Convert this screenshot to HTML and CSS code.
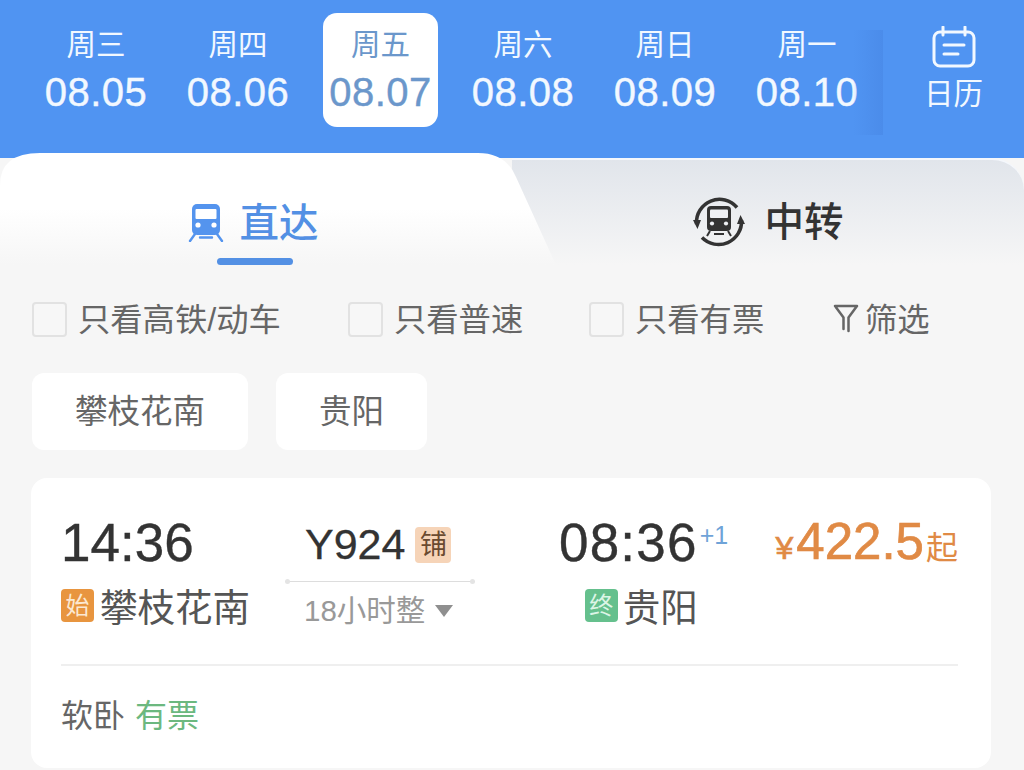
FILE: index.html
```html
<!DOCTYPE html>
<html lang="zh-CN">
<head>
    <meta charset="UTF-8">
    <meta name="viewport" content="width=device-width, initial-scale=1.0">
    <title>车次列表</title>
    <link rel="stylesheet" href="styles.css">
</head>
<body>
    <div class="date-bar">
        <div class="date-list">
            <div class="date-item"><span class="week">周三</span><span class="day">08.05</span></div>
            <div class="date-item"><span class="week">周四</span><span class="day">08.06</span></div>
            <div class="date-item active"><span class="week">周五</span><span class="day">08.07</span></div>
            <div class="date-item"><span class="week">周六</span><span class="day">08.08</span></div>
            <div class="date-item"><span class="week">周日</span><span class="day">08.09</span></div>
            <div class="date-item"><span class="week">周一</span><span class="day">08.10</span></div>
        </div>
        <div class="calendar-btn">
            <svg class="calendar-icon" viewBox="0 0 44 42" width="44" height="42">
                <rect x="2" y="6" width="40" height="34" rx="6" fill="none" stroke="#f2f8ff" stroke-width="3"/>
                <path d="M11 1v8M33 1v8M12 19h20M12 28h14" fill="none" stroke="#f2f8ff" stroke-width="3" stroke-linecap="round"/>
            </svg>
            <span>日历</span>
        </div>
    </div>

    <div class="tabs">
        <div class="tab tab-direct">
            <div class="tab-label">
                <svg viewBox="0 0 36 38" width="36" height="38">
                    <rect x="4" y="0" width="28" height="31" rx="5" fill="#5494ee"/>
                    <rect x="7.500" y="5" width="21" height="10" rx="1" fill="#fff"/>
                    <circle cx="10" cy="21" r="2.600" fill="#fff"/>
                    <circle cx="26" cy="21" r="2.600" fill="#fff"/>
                    <path d="M7 30l-5 7M29 30l5 7M12 33.500h12" fill="none" stroke="#5494ee" stroke-width="2.400" stroke-linecap="round"/>
                </svg>
                <span>直达</span>
            </div>
            <i class="tab-line"></i>
        </div>
        <div class="tab tab-transfer">
            <div class="tab-label">
                <svg viewBox="0 0 52 52" width="52" height="52">
                    <path d="M3.500 28A23 23 0 0 1 44 11.500M48.500 24A23 23 0 0 1 9 41.500" fill="none" stroke="#333" stroke-width="3.500"/>
                    <path d="M0 24l8 0-3.500 9zM52 28l-8 0 3.500-9z" fill="#333"/>
                    <rect x="14" y="10" width="24" height="25" rx="4" fill="#333"/>
                    <rect x="17" y="13.500" width="18" height="8.500" rx="1" fill="#eef0f4"/>
                    <circle cx="19" cy="27.500" r="2.100" fill="#eef0f4"/>
                    <circle cx="33" cy="27.500" r="2.100" fill="#eef0f4"/>
                    <path d="M17 35l-3 5M35 35l3 5M21 38h10" fill="none" stroke="#333" stroke-width="2"/>
                </svg>
                <span>中转</span>
            </div>
        </div>
    </div>

    <div class="filters">
        <label class="check check-high"><i class="box"></i>只看高铁/动车</label>
        <label class="check check-normal"><i class="box"></i>只看普速</label>
        <label class="check check-ticket"><i class="box"></i>只看有票</label>
        <div class="filter-btn">
            <svg viewBox="0 0 26 30" width="26" height="30">
                <path d="M2 3h22l-8.500 11.500V28M10.500 26V14.500L2 3" fill="none" stroke="#666" stroke-width="2.500" stroke-linejoin="round" stroke-linecap="round"/>
            </svg>
            <span>筛选</span>
        </div>
    </div>

    <div class="stations">
        <div class="pill">攀枝花南</div>
        <div class="pill">贵阳</div>
    </div>

    <div class="card">
        <div class="card-main">
            <div class="depart">
                <div class="time">14:36</div>
                <div class="station"><i class="tag tag-start">始</i>攀枝花南</div>
            </div>
            <div class="middle">
                <div class="train-no">Y924<i class="berth">铺</i></div>
                <div class="route-line"></div>
                <div class="duration">18小时整<i class="arrow"></i></div>
            </div>
            <div class="arrive">
                <div class="arrive-inner">
                    <div class="time time-arrive">08:36<sup class="plus">+1</sup></div>
                    <div class="station"><i class="tag tag-end">终</i>贵阳</div>
                </div>
            </div>
            <div class="price"><small class="yen">¥</small>422.5<small class="from">起</small></div>
        </div>
        <div class="seats">软卧<span class="seat-left">有票</span></div>
    </div>
</body>
</html>
```

FILE: styles.css
```css
* { box-sizing: border-box; }
html, body { height: 100%; }
body { margin: 0; width: 1024px; height: 770px; overflow: hidden; background: #f6f6f6; font-family: "Liberation Sans", "Noto Sans CJK SC", sans-serif; color: #333; }
i { font-style: normal; }

/* date strip */
.date-bar { height: 158px; background: #5094f2; display: flex; padding: 13px 0 0 25px; color: #f2f8ff; }
.date-list { display: flex; width: 858px; }
.date-item { width: 142px; height: 114px; display: flex; flex-direction: column; align-items: center; border-radius: 14px; }
.date-item .week { font-size: 29.500px; line-height: 36px; margin-top: 14px; }
.date-item .day { font-size: 40px; line-height: 48px; margin-top: 5px; letter-spacing: 0.5px; -webkit-text-stroke: 0.4px; }
.date-item.active { width: 115px; margin: 0 14px; background: #fff; color: #6b97cb; }
.calendar-btn { position: relative; flex: 1; display: flex; flex-direction: column; align-items: center; padding-top: 13px; }
.calendar-btn::before { content: ""; position: absolute; left: -30px; top: 17px; width: 30px; height: 105px; background: linear-gradient(90deg, rgba(75, 140, 234, 0), #4b8cea); }
.calendar-icon { display: block; margin-left: 1px; }
.calendar-btn span { font-size: 29.500px; line-height: 40px; margin-top: 6px; }

/* tabs */
.tabs { display: flex; height: 112px; margin-top: -5px; }
.tab { display: flex; flex-direction: column; align-items: center; }
.tab-label { display: flex; align-items: center; font-size: 39.500px; line-height: 52px; font-weight: 500; }
.tab-direct { position: relative; z-index: 1; width: 555px; padding: 44px 49px 0 0; background: linear-gradient(180deg, #fff 50%, #f6f6f6 100%); color: #5390e4; clip-path: path("M0 32 Q0 0 40 0 H478 Q506 0 516 24 L556 112 H0 Z"); }
.tab-direct svg { margin-right: 16px; }
.tab-line { width: 76px; height: 7px; margin: 9px 0 0 4px; border-radius: 4px; background: #5390e4; }
.tab-transfer { flex: 1; margin: 5px 0 0 -43px; padding: 36px 0 0 0; background: linear-gradient(180deg, #e1e5eb 0%, #f6f6f6 100%); border-top: 2px solid #f4f7fc; border-top-right-radius: 32px; color: #333; }
.tab-transfer svg { margin-right: 20px; }

/* filters */
.filters { display: flex; align-items: center; height: 70px; margin-top: 17px; padding-left: 32px; font-size: 32.300px; color: #666; }
.check { display: flex; align-items: center; }
.box { width: 35px; height: 35px; margin: 4px 11px 0 0; border: 2px solid #e2e2e2; border-radius: 4px; background: #f7f7f7; }
.check-high { width: 316px; }
.check-normal { width: 241px; }
.check-ticket { width: 244px; }
.filter-btn { display: flex; align-items: center; }
.filter-btn svg { margin: 2px 6px 0 0; }

/* station pills */
.stations { display: flex; gap: 28px; margin-top: 21px; padding-left: 32px; }
.pill { height: 77px; padding: 0 43px 6px; display: flex; align-items: center; background: #fff; border-radius: 12px; font-size: 32.500px; color: #666; }

/* train card */
.card { margin: 28px 33px 0 31px; height: 290px; padding: 34px 33px 0 30px; background: #fff; border-radius: 16px; }
.card-main { display: flex; height: 154px; border-bottom: 2px solid #efefef; }
.depart { width: 224px; }
.time { position: relative; font-size: 53px; line-height: 62px; color: #333; -webkit-text-stroke: 0.4px; }
.time-arrive { letter-spacing: 1.2px; }
.station { display: flex; align-items: center; margin-top: 9px; font-size: 37.500px; line-height: 50px; color: #555; }
.tag { display: block; width: 33px; height: 33px; margin: 0 6px 6px 0; border-radius: 4px; text-align: center; font-size: 24px; line-height: 33px; }
.tag-start { background: #e8953f; color: #fbe8d2; }
.tag-end { margin-right: 5px; background: #65c08d; color: #dcf5e6; }
.middle { width: 190px; }
.train-no { display: flex; align-items: center; height: 60px; padding: 5px 0 0 20px; font-size: 43px; color: #333; -webkit-text-stroke: 0.3px; }
.berth { width: 36px; height: 36px; margin-left: 10px; border-radius: 4px; background: #f6d4b8; text-align: center; font-size: 27px; line-height: 36px; color: #6a4a30; -webkit-text-stroke: 0; }
.route-line { position: relative; height: 1px; margin-top: 9px; background: #ddd; }
.route-line::before, .route-line::after { content: ""; position: absolute; top: -2px; width: 5px; height: 5px; border-radius: 50%; background: #e4e4e4; }
.route-line::before { left: 0; }
.route-line::after { right: 0; }
.duration { display: flex; align-items: center; margin: 9px 0 0 19px; font-size: 29.500px; line-height: 40px; color: #999; }
.arrow { width: 0; height: 0; margin-left: 10px; border: 9px solid transparent; border-top: 12px solid #8f8f8f; border-bottom: 0; }
.arrive { flex: 1; padding-left: 84px; }
.arrive-inner { display: inline-flex; flex-direction: column; align-items: flex-end; }
.plus { position: absolute; left: 100%; top: 8px; margin-left: 2px; font-size: 25px; line-height: 30px; letter-spacing: 0; color: #6fa3d8; -webkit-text-stroke: 0; }
.price { height: 60px; font-size: 51px; line-height: 60px; color: #e08a45; white-space: nowrap; -webkit-text-stroke: 0.7px; }
.yen { margin-right: 3px; font-size: 32px; }
.from { margin-left: 2px; font-size: 32px; -webkit-text-stroke: 0; }
.seats { margin-top: 26px; font-size: 32px; line-height: 48px; color: #666; }
.seat-left { margin-left: 10px; color: #6cb87f; }
```
